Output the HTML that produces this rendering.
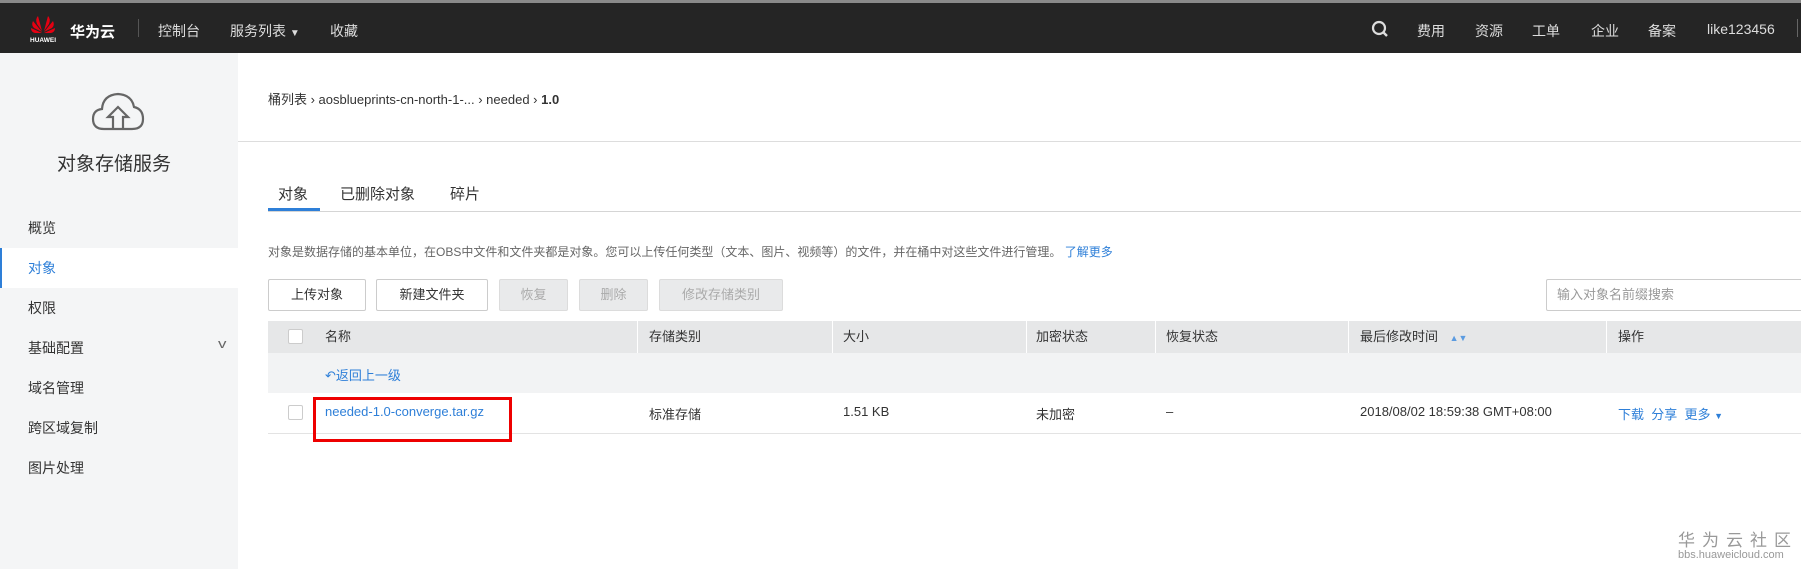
<!DOCTYPE html>
<html><head><meta charset="utf-8"><style>
*{margin:0;padding:0;box-sizing:border-box}
body{width:1801px;height:569px;overflow:hidden;background:#fff;font-family:"Liberation Sans","Noto Sans CJK SC",sans-serif;color:#333;position:relative}
.a{position:absolute;white-space:nowrap}
.top{position:absolute;left:0;top:0;width:1801px;height:53px;background:#252525;border-top:3px solid #8a8a8a}
.top .a{color:#ddd;font-size:14px;top:18px}
.side{position:absolute;left:0;top:53px;width:238px;height:516px;background:#f4f5f6}
.mi{position:absolute;left:28px;font-size:14px;color:#333}
.btn{position:absolute;top:279px;height:32px;border:1px solid #ccc;background:#fff;font-size:13px;color:#333;text-align:center;line-height:30px;border-radius:2px}
.dis{background:#e9eaeb;color:#aaa;border-color:#dcdcdc}
.th{position:absolute;top:321px;height:32px;line-height:32px;font-size:13px;color:#333}
.sep{position:absolute;top:321px;width:1px;height:32px;background:#fff}
.td{position:absolute;top:404px;font-size:13px;color:#333}
.blue{color:#2e7fd8}
.cb{position:absolute;left:288px;width:15px;height:15px;border:1px solid #ccc;background:#fff;border-radius:2px}
</style></head><body>
<div class="top">
<svg class="a" style="left:30px;top:10px" width="26" height="30" viewBox="0 0 26 30">
<g fill="#e60012"><path d="M12 18 L8 3 Q5 6 7 11Z"/><path d="M14 18 L18 3 Q21 6 19 11Z"/><path d="M12 19 L3 8 Q1 12 4 15Z"/><path d="M14 19 L23 8 Q25 12 22 15Z"/><path d="M12 20 L1 15 Q1 19 5 20Z"/><path d="M14 20 L25 15 Q25 19 21 20Z"/></g>
<text x="13" y="29" fill="#fff" font-size="6.5" text-anchor="middle" font-family="Liberation Sans" font-weight="bold">HUAWEI</text></svg>
<div class="a" style="left:70px;color:#fff;font-weight:bold;font-size:15px">华为云</div>
<div class="a" style="left:138px;top:16px;width:1px;height:18px;background:#555"></div>
<div class="a" style="left:158px">控制台</div>
<div class="a" style="left:230px">服务列表 <span style="font-size:10px">▼</span></div>
<div class="a" style="left:330px">收藏</div>
<svg class="a" style="left:1371px;top:17px" width="18" height="18" viewBox="0 0 18 18"><circle cx="8" cy="8" r="6" fill="none" stroke="#ddd" stroke-width="2.2"/><path d="M12 12 L16 16" stroke="#ddd" stroke-width="2.4"/></svg>
<div class="a" style="left:1417px">费用</div>
<div class="a" style="left:1475px">资源</div>
<div class="a" style="left:1532px">工单</div>
<div class="a" style="left:1591px">企业</div>
<div class="a" style="left:1648px">备案</div>
<div class="a" style="left:1707px">like123456</div>
<div class="a" style="left:1797px;top:16px;width:1px;height:18px;background:#666"></div>
</div>
<div class="side">
<svg class="a" style="left:90px;top:36px" width="56" height="46" viewBox="0 0 56 46"><path d="M14 40 Q3 40 3 30 Q3 21 12 20 Q13 6 28 5 Q42 6 44 18 Q53 20 53 30 Q53 40 42 40 Z" fill="none" stroke="#666" stroke-width="2.2"/><path d="M23 40 V28 H18 L28 18 L38 28 H33 V40" fill="none" stroke="#666" stroke-width="2.2"/></svg>
<div class="a" style="left:57px;top:96px;font-size:19px;color:#333">对象存储服务</div>
<div class="mi" style="top:165px">概览</div>
<div class="a" style="left:0;top:195px;width:238px;height:40px;background:#fff;border-left:2px solid #2e7fd8"></div>
<div class="mi blue" style="top:205px">对象</div>
<div class="mi" style="top:245px">权限</div>
<div class="mi" style="top:285px">基础配置</div>
<div class="a" style="left:219px;top:283px;font-size:13px;color:#666;transform:scaleX(1.3)">v</div>
<div class="mi" style="top:325px">域名管理</div>
<div class="mi" style="top:365px">跨区域复制</div>
<div class="mi" style="top:405px">图片处理</div>
</div>
<div class="a" style="left:268px;top:89px;font-size:13px;color:#333">桶列表 › aosblueprints-cn-north-1-... › needed › <b>1.0</b></div>
<div class="a" style="left:238px;top:141px;width:1563px;height:1px;background:#ddd"></div>
<div class="a" style="left:278px;top:183px;font-size:15px">对象</div>
<div class="a" style="left:340px;top:183px;font-size:15px">已删除对象</div>
<div class="a" style="left:450px;top:183px;font-size:15px">碎片</div>
<div class="a" style="left:268px;top:211px;width:1533px;height:1px;background:#d5d5d5"></div>
<div class="a" style="left:268px;top:208px;width:52px;height:3px;background:#2e7fd8"></div>
<div class="a" style="left:268px;top:243px;font-size:12px;color:#666">对象是数据存储的基本单位，在OBS中文件和文件夹都是对象。您可以上传任何类型（文本、图片、视频等）的文件，并在桶中对这些文件进行管理。 <span class="blue">了解更多</span></div>
<div class="btn" style="left:268px;width:98px">上传对象</div>
<div class="btn" style="left:376px;width:112px">新建文件夹</div>
<div class="btn dis" style="left:499px;width:69px">恢复</div>
<div class="btn dis" style="left:579px;width:69px">删除</div>
<div class="btn dis" style="left:659px;width:124px">修改存储类别</div>
<div class="btn" style="left:1546px;width:260px;text-align:left;padding-left:10px;color:#999;font-size:13px">输入对象名前缀搜索</div>
<div class="a" style="left:268px;top:321px;width:1533px;height:32px;background:#e6e7e8"></div>
<div class="cb" style="top:329px"></div>
<div class="th" style="left:325px">名称</div>
<div class="sep" style="left:637px"></div><div class="th" style="left:649px">存储类别</div>
<div class="sep" style="left:832px"></div><div class="th" style="left:843px">大小</div>
<div class="sep" style="left:1026px"></div><div class="th" style="left:1036px">加密状态</div>
<div class="sep" style="left:1155px"></div><div class="th" style="left:1166px">恢复状态</div>
<div class="sep" style="left:1348px"></div><div class="th" style="left:1360px">最后修改时间 <span style="font-size:9px;color:#5b9be0;margin-left:8px">▲▼</span></div>
<div class="sep" style="left:1606px"></div><div class="th" style="left:1618px">操作</div>
<div class="a" style="left:268px;top:353px;width:1533px;height:40px;background:#f2f3f4"></div>
<div class="a blue" style="left:325px;top:365px;font-size:13px">↶返回上一级</div>
<div class="a" style="left:268px;top:433px;width:1533px;height:1px;background:#e3e3e3"></div>
<div class="cb" style="top:405px"></div>
<div class="td blue" style="left:325px">needed-1.0-converge.tar.gz</div>
<div class="a" style="left:313px;top:397px;width:199px;height:45px;border:3px solid #e00"></div>
<div class="td" style="left:649px">标准存储</div>
<div class="td" style="left:843px">1.51 KB</div>
<div class="td" style="left:1036px">未加密</div>
<div class="td" style="left:1166px">–</div>
<div class="td" style="left:1360px">2018/08/02 18:59:38 GMT+08:00</div>
<div class="td blue" style="left:1618px">下载&nbsp; 分享&nbsp; 更多 <span style="font-size:9px">▼</span></div>
<div class="a" style="left:1678px;top:526px;font-size:17px;color:#999;letter-spacing:7px">华为云社区</div>
<div class="a" style="left:1678px;top:549px;font-size:11px;color:#999">bbs.huaweicloud.com</div>
</body></html>
